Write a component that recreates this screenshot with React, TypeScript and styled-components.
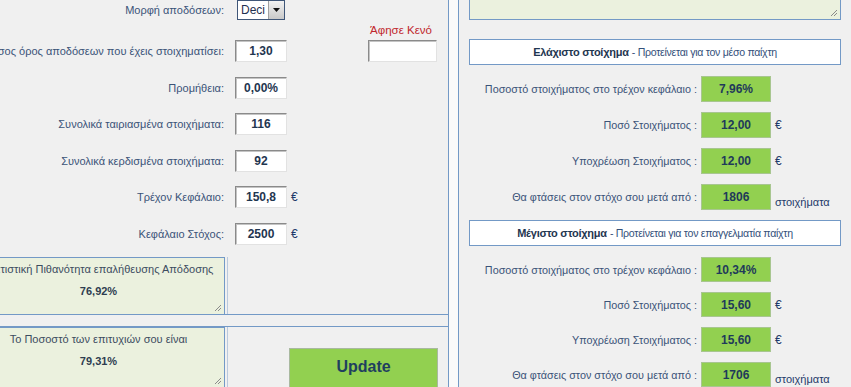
import React from "react";
import styled, { createGlobalStyle } from "styled-components";

const GlobalStyle = createGlobalStyle`
  html, body {
    margin: 0;
    padding: 0;
    overflow: hidden;
    background: #f0f0f0;
  }
  body {
    font-family: "Liberation Sans", Arial, sans-serif;
    font-size: 11px;
    color: #34507a;
  }
`;

const BLUE = "#7399c6";

type LeftRow = { label: string; value: string; unit?: string; extra?: boolean };

const leftRows: LeftRow[] = [
  { label: "Μέσος όρος αποδόσεων που έχεις στοιχηματίσει:", value: "1,30", extra: true },
  { label: "Προμήθεια:", value: "0,00%" },
  { label: "Συνολικά ταιριασμένα στοιχήματα:", value: "116" },
  { label: "Συνολικά κερδισμένα στοιχήματα:", value: "92" },
  { label: "Τρέχον Κεφάλαιο:", value: "150,8", unit: "€" },
  { label: "Κεφάλαιο Στόχος:", value: "2500", unit: "€" },
];

type StakeRow = { label: string; value: string; unit?: string };

const minRows: StakeRow[] = [
  { label: "Ποσοστό στοιχήματος στο τρέχον κεφάλαιο :", value: "7,96%" },
  { label: "Ποσό Στοιχήματος :", value: "12,00", unit: "€" },
  { label: "Υποχρέωση Στοιχήματος :", value: "12,00", unit: "€" },
  { label: "Θα φτάσεις στον στόχο σου μετά από :", value: "1806", unit: "στοιχήματα" },
];

const maxRows: StakeRow[] = [
  { label: "Ποσοστό στοιχήματος στο τρέχον κεφάλαιο :", value: "10,34%" },
  { label: "Ποσό Στοιχήματος :", value: "15,60", unit: "€" },
  { label: "Υποχρέωση Στοιχήματος :", value: "15,60", unit: "€" },
  { label: "Θα φτάσεις στον στόχο σου μετά από :", value: "1706", unit: "στοιχήματα" },
];

function ResizeGrip() {
  return (
    <Grip width="8" height="8" viewBox="0 0 8 8">
      <path d="M7 1 L1 7 M7 4 L4 7" stroke="#8a8a8a" strokeWidth="1" fill="none" />
    </Grip>
  );
}

function StakeSection({ title, subtitle, rows, boxHeight }: { title: string; subtitle: string; rows: StakeRow[]; boxHeight: number }) {
  return (
    <Section>
      <SectionHeader>
        <strong>{title}</strong> <span>- {subtitle}</span>
      </SectionHeader>
      <StakeList>
        {rows.map((r, i) => (
          <StakeLine key={i} $h={boxHeight}>
            <StakeLabel>{r.label}</StakeLabel>
            <GreenBox>{r.value}</GreenBox>
            {r.unit && <StakeUnit $low={r.unit !== "€"}>{r.unit}</StakeUnit>}
          </StakeLine>
        ))}
      </StakeList>
    </Section>
  );
}

export default function App() {
  return (
    <>
      <GlobalStyle />
      <Page>
        <LeftPanel>
          <Form>
            <FormRow $h={20}>
              <Label>Μορφή αποδόσεων:</Label>
              <Select>
                <SelectText>Deci</SelectText>
                <SelectArrow>
                  <svg width="7" height="4" viewBox="0 0 7 4">
                    <path d="M0 0 H7 L3.5 4 Z" fill="#111" />
                  </svg>
                </SelectArrow>
              </Select>
            </FormRow>
            <FormRow $h={20}>
              <span />
              <span />
              <span />
              <Caption>Άφησε Κενό</Caption>
            </FormRow>
            {leftRows.map((r, i) => (
              <FormRow key={i} $h={22} $mt={i === 0 ? 0 : 14.6}>
                <Label>{r.label}</Label>
                <ValueBox>{r.value}</ValueBox>
                <Unit>{r.unit ?? ""}</Unit>
                {r.extra ? <EmptyBox /> : <span />}
              </FormRow>
            ))}
          </Form>

          <ResultBlock $first>
            <ResultArea>
              <ResultLabel>Στατιστική Πιθανότητα επαλήθευσης Απόδοσης</ResultLabel>
              <ResultValue>76,92%</ResultValue>
              <ResizeGrip />
            </ResultArea>
            <ResultCell />
          </ResultBlock>
          <ResultBlock>
            <ResultArea>
              <ResultLabel>Το Ποσοστό των επιτυχιών σου είναι</ResultLabel>
              <ResultValue>79,31%</ResultValue>
              <ResizeGrip />
            </ResultArea>
            <ResultCell>
              <UpdateButton>Update</UpdateButton>
            </ResultCell>
          </ResultBlock>
        </LeftPanel>

        <Gutter />

        <RightPanel>
          <NotesArea>
            <ResizeGrip />
          </NotesArea>
          <StakeSection
            title="Ελάχιστο στοίχημα"
            subtitle="Προτείνεται για τον μέσο παίχτη"
            rows={minRows}
            boxHeight={26}
          />
          <StakeSection
            title="Μέγιστο στοίχημα"
            subtitle="Προτείνεται για τον επαγγελματία παίχτη"
            rows={maxRows}
            boxHeight={25}
          />
        </RightPanel>
      </Page>
    </>
  );
}

const Page = styled.div`
  display: flex;
  align-items: stretch;
  margin-left: -40px;
  height: 387px;
`;

const LeftPanel = styled.div`
  width: 489px;
  flex: none;
  box-sizing: border-box;
  border-right: 1px solid ${BLUE};
  background: #f0f0f0;
  display: flex;
  flex-direction: column;
`;

const Form = styled.div`
  display: flex;
  flex-direction: column;
`;

const FormRow = styled.div<{ $h: number; $mt?: number }>`
  display: grid;
  grid-template-columns: 275px 52px 80px 70px;
  align-items: center;
  height: ${(p) => p.$h}px;
  margin-top: ${(p) => p.$mt ?? 0}px;
`;

const Label = styled.div`
  display: flex;
  justify-content: flex-end;
  white-space: nowrap;
  padding-right: 11px;
  color: #3a5378;
`;

const Select = styled.div`
  display: flex;
  width: 48px;
  height: 20px;
  margin-left: 2px;
  box-sizing: border-box;
  border: 1px solid #3f5678;
  background: #fff;
`;

const SelectText = styled.span`
  flex: 1;
  padding-left: 3px;
  font-size: 12px;
  line-height: 18px;
  color: #1f3050;
`;

const SelectArrow = styled.span`
  width: 15px;
  display: flex;
  align-items: center;
  justify-content: center;
  background: linear-gradient(#f2f2f2, #c9c9c9);
  border-left: 1px solid #a0a0a0;
`;

const Caption = styled.div`
  color: #c0272d;
  font-size: 11.5px;
  text-align: center;
  white-space: nowrap;
  margin-left: -2px;
`;

const ValueBox = styled.div`
  height: 22px;
  box-sizing: border-box;
  border: 1px solid;
  border-color: #8a8a8a #e2e2e2 #e2e2e2 #8a8a8a;
  box-shadow: inset 1px 1px 0 #c4c4c4;
  background: #fff;
  font-weight: bold;
  font-size: 12px;
  color: #1f3650;
  text-align: center;
  line-height: 20px;
`;

const Unit = styled.div`
  padding-left: 4px;
  font-size: 12px;
  color: #1f3a6a;
`;

const EmptyBox = styled(ValueBox)`
  width: 69px;
  margin-left: 1px;
`;

const ResultBlock = styled.div<{ $first?: boolean }>`
  display: flex;
  margin-top: ${(p) => (p.$first ? 12 : 11)}px;
  border-top: ${(p) => (p.$first ? "none" : `1px solid ${BLUE}`)};
  border-bottom: ${(p) => (p.$first ? `1px solid ${BLUE}` : "none")};
  height: ${(p) => (p.$first ? 59 : 60)}px;
`;

const ResultArea = styled.div`
  position: relative;
  width: 253px;
  margin-left: 12px;
  box-sizing: border-box;
  border: 1px solid ${BLUE};
  border-bottom: none;
  background: #ebf1de;
  text-align: center;
  padding-top: 4px;
`;

const ResultLabel = styled.div`
  white-space: nowrap;
  line-height: 14px;
  color: #3c4c60;
`;

const ResultValue = styled.div`
  margin-top: 8px;
  line-height: 14px;
  font-weight: bold;
  font-size: 11px;
  color: #2e3d50;
`;

const Grip = styled.svg`
  position: absolute;
  right: 2px;
  bottom: 2px;
`;

const ResultCell = styled.div`
  flex: 1;
  margin-left: 2px;
  border-left: 1px solid #b9c9dd;
  display: flex;
  justify-content: flex-end;
  align-items: flex-start;
  padding: 21px 10px 0 0;
`;

const UpdateButton = styled.div`
  width: 149px;
  height: 40px;
  box-sizing: border-box;
  background: #92d050;
  border: 1px solid #a9b9a0;
  color: #1f3f5f;
  font-weight: bold;
  font-size: 16px;
  text-align: center;
  line-height: 36px;
`;

const Gutter = styled.div`
  width: 9px;
  flex: none;
  background: #fafafa;
`;

const RightPanel = styled.div`
  flex: 1;
  border-left: 1px solid ${BLUE};
  background: #f0f0f0;
  padding-left: 10px;
  display: flex;
  flex-direction: column;
`;

const NotesArea = styled.div`
  position: relative;
  width: 372px;
  height: 51px;
  margin-top: -30px;
  box-sizing: border-box;
  border: 1px solid ${BLUE};
  background: #ebf1de;
`;

const Section = styled.div`
  display: flex;
  flex-direction: column;
  margin-top: 19px;

  & + & {
    margin-top: 10px;
  }
`;

const SectionHeader = styled.div`
  width: 372px;
  height: 26px;
  box-sizing: border-box;
  border: 1px solid ${BLUE};
  background: #fff;
  text-align: center;
  line-height: 24px;
  white-space: nowrap;

  strong {
    color: #1f3650;
    font-size: 11px;
    letter-spacing: -0.25px;
  }

  span {
    font-size: 10.6px;
    letter-spacing: -0.3px;
    color: #34507a;
  }
`;

const StakeList = styled.div`
  display: flex;
  flex-direction: column;
  gap: 10px;
  margin-top: 11px;
`;

const StakeLine = styled.div<{ $h: number }>`
  display: grid;
  grid-template-columns: 232px 70px auto;
  height: ${(p) => p.$h}px;
  align-items: center;
`;

const StakeLabel = styled.div`
  display: flex;
  justify-content: flex-end;
  white-space: nowrap;
  padding-right: 4px;
  font-size: 10.8px;
  color: #3a5378;
`;

const GreenBox = styled.div`
  height: 100%;
  box-sizing: border-box;
  background: #92d050;
  border: 1px solid #a8c690;
  font-weight: bold;
  font-size: 12px;
  color: #1f3a5a;
  display: flex;
  align-items: center;
  justify-content: center;
`;

const StakeUnit = styled.div<{ $low: boolean }>`
  padding-left: 4px;
  font-size: ${(p) => (p.$low ? 11 : 12)}px;
  color: #1f3a6a;
  align-self: ${(p) => (p.$low ? "end" : "center")};
  margin-bottom: ${(p) => (p.$low ? 2 : 0)}px;
`;
